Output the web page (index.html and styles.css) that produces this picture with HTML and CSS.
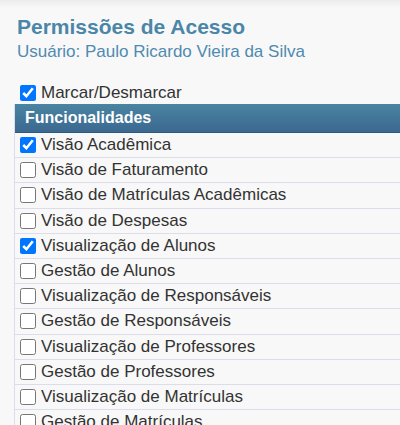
FILE: index.html
```html
<!DOCTYPE html>
<html lang="pt-BR">
<head>
<meta charset="utf-8">
<title>Permissões de Acesso</title>
<link rel="stylesheet" href="styles.css">
</head>
<body>
<div class="page">
  <header class="head">
    <h1 class="title">Permissões de Acesso</h1>
    <p class="subtitle">Usuário: Paulo Ricardo Vieira da Silva</p>
  </header>
  <label class="toggle-all"><input type="checkbox" checked> <span>Marcar/Desmarcar</span></label>
  <div class="grid">
    <div class="grid-head">Funcionalidades</div>
    <label class="row"><input type="checkbox" checked><span>Visão Acadêmica</span></label>
    <label class="row"><input type="checkbox"><span>Visão de Faturamento</span></label>
    <label class="row"><input type="checkbox"><span>Visão de Matrículas Acadêmicas</span></label>
    <label class="row"><input type="checkbox"><span>Visão de Despesas</span></label>
    <label class="row"><input type="checkbox" checked><span>Visualização de Alunos</span></label>
    <label class="row"><input type="checkbox"><span>Gestão de Alunos</span></label>
    <label class="row"><input type="checkbox"><span>Visualização de Responsáveis</span></label>
    <label class="row"><input type="checkbox"><span>Gestão de Responsáveis</span></label>
    <label class="row"><input type="checkbox"><span>Visualização de Professores</span></label>
    <label class="row"><input type="checkbox"><span>Gestão de Professores</span></label>
    <label class="row"><input type="checkbox"><span>Visualização de Matrículas</span></label>
    <label class="row"><input type="checkbox"><span>Gestão de Matrículas</span></label>
  </div>
</div>
</body>
</html>
```
FILE: styles.css
```css
html, body {
  margin: 0;
  padding: 0;
  height: 100%;
  overflow: hidden;
}
body {
  background: #f8f8f8;
  font-family: "Liberation Sans", Arial, sans-serif;
  color: #333;
}
.page {
  background: linear-gradient(#ececec, #f8f8f8 8px);
  padding-top: 15px;
}
.head {
  padding-left: 17px;
}
.title {
  margin: 0;
  font-size: 21px;
  font-weight: bold;
  line-height: 24px;
  color: #4a86a8;
}
.subtitle {
  margin: 3px 0 0;
  font-size: 17px;
  line-height: 20px;
  color: #4f8ab0;
}
.toggle-all {
  display: flex;
  align-items: center;
  gap: 5px;
  margin: 21px 0 0 20px;
  height: 20px;
  font-size: 17px;
}
input[type="checkbox"] {
  width: 16px;
  height: 16px;
  margin: 0;
  accent-color: #0075ff;
}
.grid {
  margin-left: 14px;
  margin-top: 1px;
  border-left: 1px solid #dcdcea;
}
.grid-head {
  height: 28px;
  line-height: 28px;
  padding-left: 10px;
  font-size: 16px;
  font-weight: bold;
  color: #fff;
  background: linear-gradient(#4a84a2, #3c6890);
  border-bottom: 1px solid #2f5a80;
}
.row {
  display: flex;
  align-items: center;
  gap: 5px;
  height: 24.2px;
  padding-left: 5px;
  border-bottom: 1px solid #dcdcea;
  font-size: 17px;
}
```
